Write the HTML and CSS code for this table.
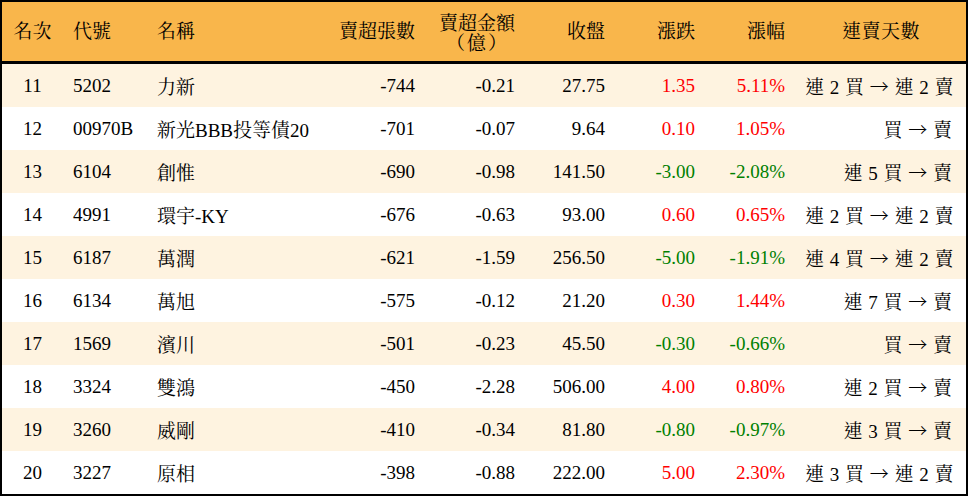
FILE: index.html
```html
<!DOCTYPE html>
<html lang="zh-Hant">
<head>
<meta charset="utf-8">
<link rel="stylesheet" href="styles.css">
</head>
<body>
<table class="rank">
  <colgroup>
    <col class="c-rank"><col class="c-code"><col class="c-name"><col class="c-vol"><col class="c-amt"><col class="c-close"><col class="c-chg"><col class="c-pct"><col class="c-days">
  </colgroup>
  <thead>
    <tr>
      <th class="ctr">名次</th>
      <th class="lft">代號</th>
      <th class="lft">名稱</th>
      <th class="rgt">賣超張數</th>
      <th class="rgt two">賣超金額<br><span class="paren">（億）</span></th>
      <th class="rgt">收盤</th>
      <th class="rgt">漲跌</th>
      <th class="rgt">漲幅</th>
      <th class="rgt days-h">連賣天數</th>
    </tr>
  </thead>
  <tbody>
    <tr class="alt"><td class="ctr">11</td><td>5202</td><td>力新</td><td class="rgt">-744</td><td class="rgt">-0.21</td><td class="rgt">27.75</td><td class="rgt up">1.35</td><td class="rgt up">5.11%</td><td class="rgt days">連 2 買 <span class="arr">→</span> 連 2 賣</td></tr>
    <tr><td class="ctr">12</td><td>00970B</td><td>新光BBB投等債20</td><td class="rgt">-701</td><td class="rgt">-0.07</td><td class="rgt">9.64</td><td class="rgt up">0.10</td><td class="rgt up">1.05%</td><td class="rgt days">買 <span class="arr">→</span> 賣</td></tr>
    <tr class="alt"><td class="ctr">13</td><td>6104</td><td>創惟</td><td class="rgt">-690</td><td class="rgt">-0.98</td><td class="rgt">141.50</td><td class="rgt dn">-3.00</td><td class="rgt dn">-2.08%</td><td class="rgt days">連 5 買 <span class="arr">→</span> 賣</td></tr>
    <tr><td class="ctr">14</td><td>4991</td><td>環宇-KY</td><td class="rgt">-676</td><td class="rgt">-0.63</td><td class="rgt">93.00</td><td class="rgt up">0.60</td><td class="rgt up">0.65%</td><td class="rgt days">連 2 買 <span class="arr">→</span> 連 2 賣</td></tr>
    <tr class="alt"><td class="ctr">15</td><td>6187</td><td>萬潤</td><td class="rgt">-621</td><td class="rgt">-1.59</td><td class="rgt">256.50</td><td class="rgt dn">-5.00</td><td class="rgt dn">-1.91%</td><td class="rgt days">連 4 買 <span class="arr">→</span> 連 2 賣</td></tr>
    <tr><td class="ctr">16</td><td>6134</td><td>萬旭</td><td class="rgt">-575</td><td class="rgt">-0.12</td><td class="rgt">21.20</td><td class="rgt up">0.30</td><td class="rgt up">1.44%</td><td class="rgt days">連 7 買 <span class="arr">→</span> 賣</td></tr>
    <tr class="alt"><td class="ctr">17</td><td>1569</td><td>濱川</td><td class="rgt">-501</td><td class="rgt">-0.23</td><td class="rgt">45.50</td><td class="rgt dn">-0.30</td><td class="rgt dn">-0.66%</td><td class="rgt days">買 <span class="arr">→</span> 賣</td></tr>
    <tr><td class="ctr">18</td><td>3324</td><td>雙鴻</td><td class="rgt">-450</td><td class="rgt">-2.28</td><td class="rgt">506.00</td><td class="rgt up">4.00</td><td class="rgt up">0.80%</td><td class="rgt days">連 2 買 <span class="arr">→</span> 賣</td></tr>
    <tr class="alt"><td class="ctr">19</td><td>3260</td><td>威剛</td><td class="rgt">-410</td><td class="rgt">-0.34</td><td class="rgt">81.80</td><td class="rgt dn">-0.80</td><td class="rgt dn">-0.97%</td><td class="rgt days">連 3 買 <span class="arr">→</span> 賣</td></tr>
    <tr><td class="ctr">20</td><td>3227</td><td>原相</td><td class="rgt">-398</td><td class="rgt">-0.88</td><td class="rgt">222.00</td><td class="rgt up">5.00</td><td class="rgt up">2.30%</td><td class="rgt days">連 3 買 <span class="arr">→</span> 連 2 賣</td></tr>
  </tbody>
</table>
</body>
</html>
```

FILE: styles.css
```css
* { box-sizing: border-box; }
html, body { margin: 0; padding: 0; background: #ffffff; }
body {
  font-family: "Liberation Serif", "Noto Serif CJK TC", "AR PL UMing TW", "Noto Sans CJK TC", serif;
  font-size: 19px;
  color: #000;
}
.rank {
  width: 968px;
  border-collapse: separate;
  border-spacing: 0;
  table-layout: fixed;
  border-top: 2px solid #000;
  border-left: 2px solid #000;
  border-right: 2px solid #000;
  border-bottom: 2px solid #000;
}
.c-rank { width: 61px; }
.c-code { width: 84px; }
.c-name { width: 178px; }
.c-vol { width: 100px; }
.c-amt { width: 100px; }
.c-close { width: 90px; }
.c-chg { width: 90px; }
.c-pct { width: 90px; }
.c-days { width: 171px; }

thead th {
  background: #f9b64b;
  font-weight: normal;
  height: 62px;
  padding: 0 10px;
  border-bottom: 3px solid #000;
  vertical-align: middle;
  line-height: 22px;
  white-space: nowrap;
}
th.two { line-height: 20px; padding-top: 5px; }
.paren { display: inline-block; margin-right: 6px; letter-spacing: 2px; }
th.days-h { padding-right: 46px; letter-spacing: 0.5px; }

tbody td {
  height: 43px;
  padding: 0 10px;
  vertical-align: middle;
  white-space: nowrap;
}
tbody tr.alt td { background: #fef3e0; }
td.days { padding-right: 14px; word-spacing: 1px; }
.arr {
  font-family: "Noto Sans CJK TC", sans-serif;
  font-weight: 300;
}
.ctr { text-align: center; }
.lft { text-align: left; }
.rgt { text-align: right; }
.up { color: #ff0000; }
.dn { color: #008000; }
```
